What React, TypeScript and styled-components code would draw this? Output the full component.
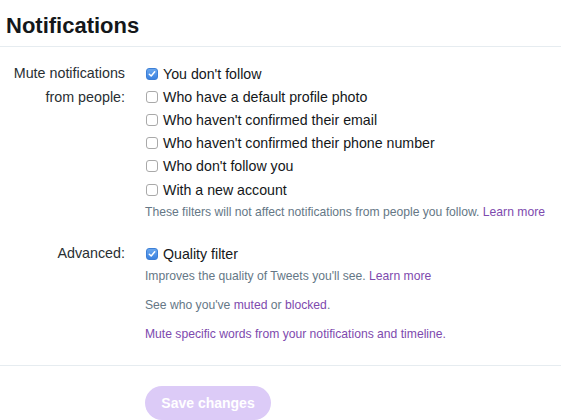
import React from "react";
import styled, { createGlobalStyle } from "styled-components";

const Global = createGlobalStyle`
  html, body { margin: 0; padding: 0; background: #fff; }
  body { font-family: "Liberation Sans", Arial, sans-serif; color: #292f33; }
  * { box-sizing: border-box; }
`;

const Page = styled.div`
  width: 561px;
  height: 420px;
  overflow: hidden;
  background: #fff;
`;

const Header = styled.div`
  height: 47px;
  padding: 13px 6px 0;
  border-bottom: 1px solid #e6ecf0;
`;

const Title = styled.h2`
  margin: 0;
  font-size: 22px;
  line-height: 26px;
  font-weight: 700;
  color: #14171a;
`;

const Section = styled.div<{ $top: number; $bottom?: number }>`
  display: grid;
  grid-template-columns: 125px 1fr;
  column-gap: 20px;
  padding-top: ${(p) => p.$top}px;
  padding-bottom: ${(p) => p.$bottom ?? 0}px;
`;

const Label = styled.div`
  text-align: right;
  font-size: 14.3px;
  line-height: 23.5px;
  color: #292f33;
  white-space: nowrap;
`;

const Column = styled.div`
  display: flex;
  flex-direction: column;
`;

const CheckRow = styled.label`
  display: flex;
  align-items: center;
  height: 23.2px;
  gap: 5px;
  padding-left: 1px;
  font-size: 14.2px;
  color: #14171a;
`;

const Box = styled.span<{ $on: boolean }>`
  width: 12px;
  height: 12px;
  border-radius: 3px;
  display: inline-flex;
  align-items: center;
  justify-content: center;
  background: ${(p) => (p.$on ? "linear-gradient(#6aa7ee, #3b82e0)" : "#fff")};
  border: 1px solid ${(p) => (p.$on ? "#3d7fd6" : "#a9a9a9")};
  flex-shrink: 0;
`;

const Help = styled.div<{ $mt?: number }>`
  font-size: 12.15px;
  line-height: 23px;
  color: #657786;
  margin-top: ${(p) => p.$mt ?? 0}px;
  white-space: nowrap;
`;

const Link = styled.a`
  color: #7e4aae;
  text-decoration: none;
`;

const Footer = styled.div`
  border-top: 1px solid #e6ecf0;
  padding: 20px 0 0 145px;
`;

const SaveButton = styled.button`
  width: 126px;
  height: 34px;
  border: none;
  border-radius: 17px;
  background: #dccbf7;
  color: #fff;
  font-family: "Liberation Sans", Arial, sans-serif;
  font-size: 14px;
  font-weight: 700;
  padding: 0;
`;

const Check = ({ on }: { on: boolean }) => (
  <Box $on={on}>
    {on && (
      <svg width="8" height="8" viewBox="0 0 8 8">
        <path d="M1.3 4.2 L3.2 6 L6.7 1.8" fill="none" stroke="#fff" strokeWidth="1.5" strokeLinecap="round" strokeLinejoin="round" />
      </svg>
    )}
  </Box>
);

const options: [string, boolean][] = [
  ["You don't follow", true],
  ["Who have a default profile photo", false],
  ["Who haven't confirmed their email", false],
  ["Who haven't confirmed their phone number", false],
  ["Who don't follow you", false],
  ["With a new account", false],
];

export default function App() {
  return (
    <Page>
      <Global />
      <Header>
        <Title>Notifications</Title>
      </Header>
      <Section $top={15}>
        <Label>
          Mute notifications
          <br />
          from people:
        </Label>
        <Column>
          {options.map(([t, on]) => (
            <CheckRow key={t}>
              <Check on={on} />
              {t}
            </CheckRow>
          ))}
          <Help>
            These filters will not affect notifications from people you follow. <Link>Learn more</Link>
          </Help>
        </Column>
      </Section>
      <Section $top={18} $bottom={19}>
        <Label>Advanced:</Label>
        <Column>
          <CheckRow>
            <Check on={true} />
            Quality filter
          </CheckRow>
          <Help>
            Improves the quality of Tweets you'll see. <Link>Learn more</Link>
          </Help>
          <Help $mt={6}>
            See who you've <Link>muted</Link> or <Link>blocked</Link>.
          </Help>
          <Help $mt={6}>
            <Link>Mute specific words from your notifications and timeline.</Link>
          </Help>
        </Column>
      </Section>
      <Footer>
        <SaveButton>Save changes</SaveButton>
      </Footer>
    </Page>
  );
}
